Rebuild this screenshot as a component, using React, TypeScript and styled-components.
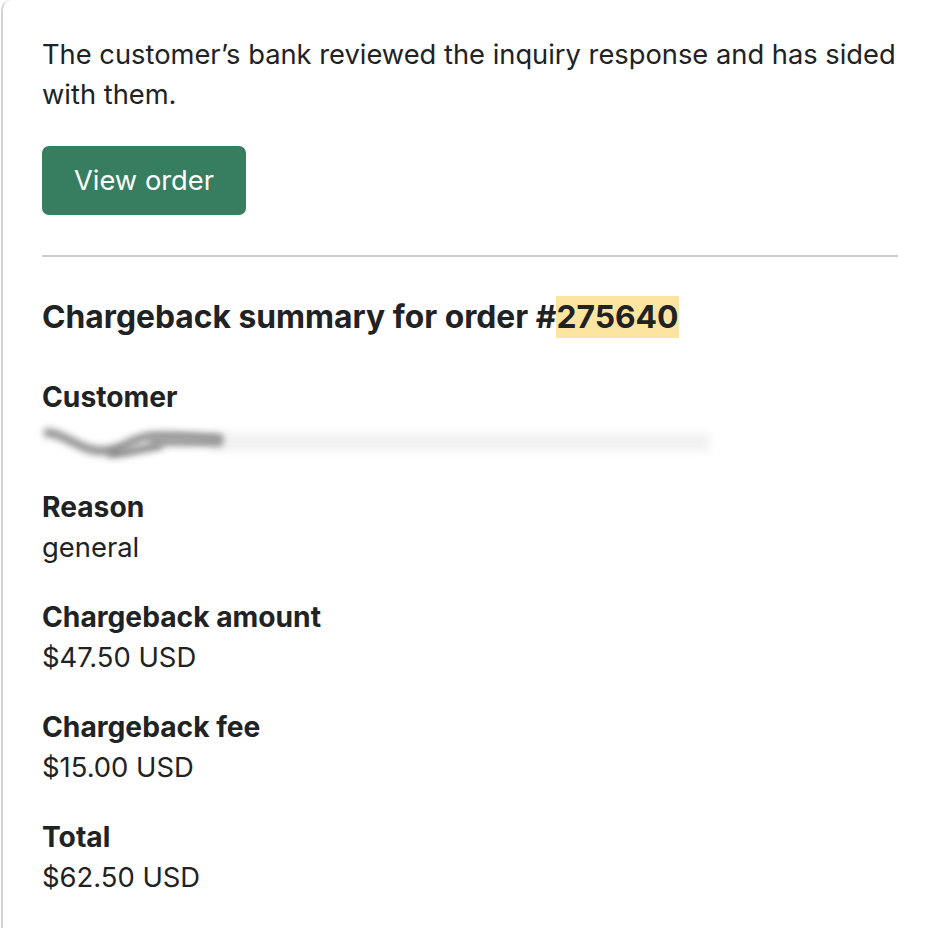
import React from "react";
import styled, { createGlobalStyle } from "styled-components";

const Global = createGlobalStyle`
  html, body { margin: 0; padding: 0; background: #ffffff; }
  body {
    font-family: Inter, "Noto Sans", "Liberation Sans", sans-serif;
    color: #202223;
    -webkit-font-smoothing: antialiased;
  }
`;

const Card = styled.div`
  margin-left: 1px;
  border-left: 2px solid #d2d2d2;
  border-top-left-radius: 10px;
  padding: 35px 0 40px 39px;
  min-height: 860px;
  width: 856px;
`;

const Intro = styled.p`
  margin: 0;
  font-size: 27.3px;
  line-height: 40px;
`;

const Button = styled.a`
  display: inline-flex;
  align-items: center;
  justify-content: center;
  margin-top: 31px;
  height: 69px;
  padding: 0 32px;
  border-radius: 7px;
  background: #367e5f;
  color: #ffffff;
  font-size: 27.3px;
  text-decoration: none;
`;

const Divider = styled.hr`
  margin: 40px 0 0;
  border: none;
  height: 2px;
  background: #cbcbcb;
`;

const Heading = styled.h2`
  margin: 40px 0 0;
  font-size: 31.8px;
  line-height: 40px;
  font-weight: 700;
`;

const Mark = styled.span`
  background: #fbe5a1;
  padding: 1px 0 2px;
`;

const Fields = styled.dl`
  margin: 40px 0 0;
  display: flex;
  flex-direction: column;
  gap: 30px;
`;

const Field = styled.div`
  display: flex;
  flex-direction: column;
`;

const Label = styled.dt`
  font-size: 28.2px;
  line-height: 40px;
  font-weight: 700;
`;

const Value = styled.dd`
  margin: 0;
  font-size: 27.4px;
  line-height: 40px;
  position: relative;
`;

const Redacted = styled.svg`
  position: absolute;
  left: -42px;
  top: 0;
  overflow: visible;
`;

const fields: { label: string; value: string }[] = [
  { label: "Reason", value: "general" },
  { label: "Chargeback amount", value: "$47.50 USD" },
  { label: "Chargeback fee", value: "$15.00 USD" },
  { label: "Total", value: "$62.50 USD" },
];

export default function App() {
  return (
    <>
      <Global />
      <Card>
        <Intro>
          The customer’s bank reviewed the inquiry response and has sided with them.
        </Intro>
        <Button href="#">View order</Button>
        <Divider />
        <Heading>
          Chargeback summary for order #<Mark>275640</Mark>
        </Heading>
        <Fields>
          <Field>
            <Label>Customer</Label>
            <Value aria-label="redacted">
              &nbsp;
              <Redacted width="720" height="60" viewBox="0 0 720 60">
                <defs>
                  <filter id="b1" x="-30%" y="-300%" width="160%" height="700%">
                    <feGaussianBlur stdDeviation="3.5" />
                  </filter>
                  <filter id="b2" x="-20%" y="-200%" width="140%" height="500%">
                    <feGaussianBlur stdDeviation="5" />
                  </filter>
                </defs>
                <rect x="210" y="16" width="500" height="18" fill="#f1f1f1" filter="url(#b2)" />
                <path
                  d="M44 16 C 62 14, 80 34, 102 34 C 122 34, 132 20, 152 19 C 176 18, 200 20, 222 22"
                  stroke="#8a8a8a"
                  strokeWidth="8"
                  fill="none"
                  filter="url(#b1)"
                />
                <path
                  d="M108 37 C 126 37, 142 32, 162 28"
                  stroke="#7d7d7d"
                  strokeWidth="7"
                  fill="none"
                  filter="url(#b1)"
                />
                <rect x="150" y="20" width="72" height="9" fill="#999999" filter="url(#b1)" />
              </Redacted>
            </Value>
          </Field>
          {fields.map((f) => (
            <Field key={f.label}>
              <Label>{f.label}</Label>
              <Value>{f.value}</Value>
            </Field>
          ))}
        </Fields>
      </Card>
    </>
  );
}
